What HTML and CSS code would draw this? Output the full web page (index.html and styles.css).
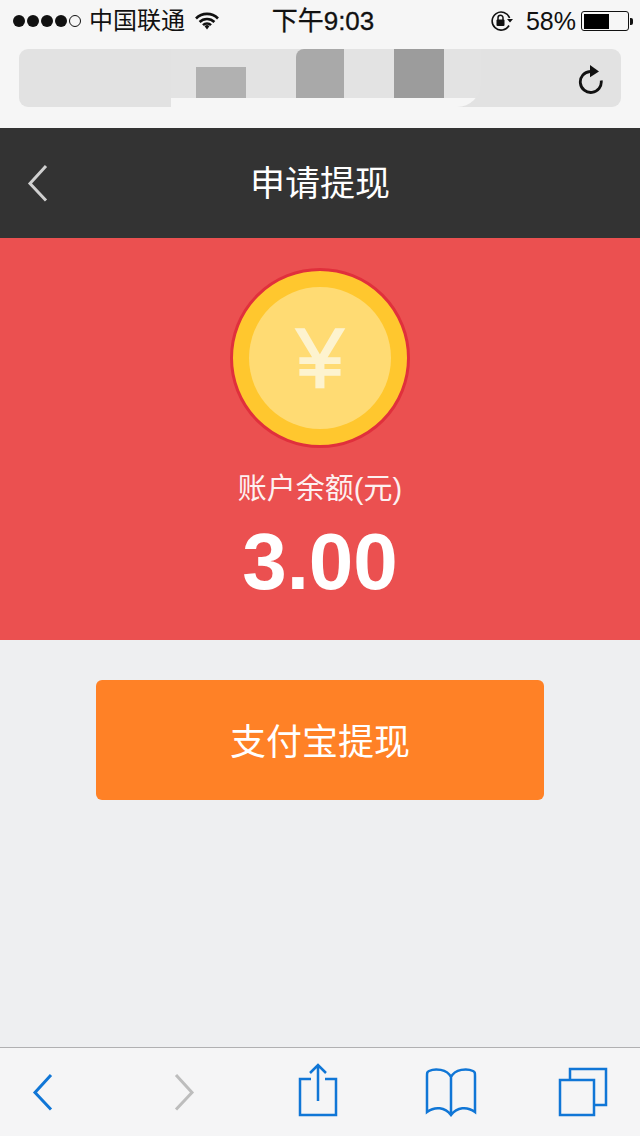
FILE: index.html
```html
<!DOCTYPE html>
<html lang="zh">
<head>
<meta charset="utf-8">
<title>申请提现</title>
<link rel="stylesheet" href="styles.css">
</head>
<body>
<div class="phone">
  <div class="chrome">
    <div class="status">
      <div class="status-left">
        <span class="signal"><i class="dot"></i><i class="dot"></i><i class="dot"></i><i class="dot"></i><i class="dot empty"></i></span>
        <span class="carrier">中国联通</span>
        <svg class="wifi" width="26" height="20" viewBox="0 0 26 20"><path d="M2 7.500a15.500 15.500 0 0 1 22 0M5.600 11a10.500 10.500 0 0 1 14.800 0M9 14.200a5.600 5.600 0 0 1 8 0" fill="none" stroke="#111" stroke-width="2.600"/><path d="M10.600 15.200a3.400 3.400 0 0 1 4.800 0L13 18.600z" fill="#111"/></svg>
      </div>
      <div class="clock">下午9:03</div>
      <div class="status-right">
        <svg class="lock" width="24" height="22" viewBox="0 0 24 22"><path d="M19 15.500A9 9 0 1 1 19.600 8" fill="none" stroke="#111" stroke-width="1.600"/><path d="M17 9h6l-3 3.600z" fill="#111"/><rect x="6.500" y="9.500" width="8" height="6.500" rx="1" fill="#111"/><path d="M8 10V7.800a2.500 2.500 0 0 1 5 0V10" fill="none" stroke="#111" stroke-width="1.500"/></svg>
        <span class="pct">58%</span>
        <span class="battery"><span class="battery-fill"></span></span>
        <span class="battery-tip"></span>
      </div>
    </div>
    <div class="url-bar">
      <span class="mask"></span>
      <span class="blur b1"></span>
      <span class="blur b2"></span>
      <span class="blur b3"></span>
      <svg class="reload" width="30" height="32" viewBox="0 0 30 32"><path d="M14 9.500a10.500 10.500 0 1 0 11.200 9" fill="none" stroke="#111" stroke-width="2.800"/><path d="M14 3l9 6.600-9 5.600z" fill="#111"/></svg>
    </div>
  </div>
  <header class="title-bar">
    <svg class="back" width="24" height="40" viewBox="0 0 24 40"><path d="M20 3L4 20.500l16 17" fill="none" stroke="#d0d0d0" stroke-width="3"/></svg>
    <h1 class="title">申请提现</h1>
  </header>
  <section class="balance">
    <div class="coin"><div class="coin-inner">¥</div></div>
    <div class="balance-label">账户余额(元)</div>
    <div class="balance-value">3.00</div>
  </section>
  <main class="content">
    <button class="withdraw">支付宝提现</button>
  </main>
  <footer class="toolbar">
    <svg class="tool-back" width="24" height="40" viewBox="0 0 24 40"><path d="M19 3L3 20.500l16 17" fill="none" stroke="#1076d6" stroke-width="3"/></svg>
    <svg class="tool-forward" width="24" height="40" viewBox="0 0 24 40"><path d="M5 3l16 17.500-16 17" fill="none" stroke="#bdbdbd" stroke-width="3"/></svg>
    <svg class="tool-share" width="40" height="54" viewBox="0 0 40 54"><path d="M13 16H2v36h36V16H27" fill="none" stroke="#1076d6" stroke-width="2.500"/><path d="M20 38V2M12 10l8-8 8 8" fill="none" stroke="#1076d6" stroke-width="2.500"/></svg>
    <svg class="tool-book" width="52" height="50" viewBox="0 0 52 50"><path d="M26 10C22 2 10 1 4 4 2 5 2 6 2 9v36c8-6 18-5 24 3 6-8 16-9 24-3V9c0-3 0-4-2-5-6-3-18-2-22 6v38" fill="none" stroke="#1076d6" stroke-width="2.500"/></svg>
    <svg class="tool-tabs" width="50" height="50" viewBox="0 0 50 50"><rect x="2" y="13" width="34" height="35" fill="none" stroke="#1076d6" stroke-width="2.500"/><path d="M12 12V2h36v36h-11" fill="none" stroke="#1076d6" stroke-width="2.500"/></svg>
  </footer>
</div>
</body>
</html>
```
FILE: styles.css
```css
* { box-sizing: border-box; }
html, body { margin: 0; padding: 0; }
body { font-family: "Liberation Sans", "Noto Sans CJK SC", sans-serif; }
.phone { width: 640px; height: 1136px; display: flex; flex-direction: column; background: #eeeff1; overflow: hidden; }

.chrome { height: 128px; background: #f6f6f6; padding: 0 19px; }
.status { height: 49px; margin: 0 -19px; padding: 0 7px 7px 13px; display: grid; grid-template-columns: 1fr auto 1fr; align-items: center; color: #111; }
.status-left { display: flex; align-items: center; }
.signal { display: flex; gap: 2px; margin-right: 8px; }
.dot { width: 12px; height: 12px; border-radius: 50%; background: #111; }
.dot.empty { background: transparent; border: 1px solid #111; }
.carrier { font-size: 24px; line-height: 28px; }
.wifi { margin-left: 9px; }
.clock { font-size: 26px; line-height: 28px; -webkit-text-stroke: 0.3px #111; }
.status-right { display: flex; align-items: center; justify-content: flex-end; }
.lock { margin-right: 12px; }
.pct { font-size: 25px; line-height: 28px; margin-right: 5px; }
.battery { width: 48px; height: 20px; border: 1.500px solid #111; border-radius: 3px; padding: 1.500px; display: block; }
.battery-fill { display: block; width: 25px; height: 100%; background: #000; }
.battery-tip { width: 3px; height: 7px; background: #111; border-radius: 0 2px 2px 0; margin-left: 1px; }

.url-bar { position: relative; height: 58px; background: #e2e2e2; border-radius: 9px; display: flex; align-items: center; justify-content: flex-end; padding-right: 15px; overflow: hidden; }
.reload { display: block; }
.mask { position: absolute; left: 152px; top: 0; width: 310px; height: 58px; background: #e3e3e3; border-radius: 0 0 24px 0; overflow: hidden; }
.mask::after { content: ""; position: absolute; left: 0; right: 0; bottom: 0; height: 9px; background: #f6f6f6; border-radius: 0 0 24px 0; }
.blur { position: absolute; bottom: 9px; }
.b1 { left: 177px; width: 50px; height: 31px; background: #b1b1b1; }
.b2 { left: 277px; width: 48px; height: 49px; background: #a9a9a9; border-radius: 8px 0 0 0; }
.b3 { left: 375px; width: 50px; height: 49px; background: #9c9c9c; }

.title-bar { height: 110px; background: #333; display: flex; align-items: center; justify-content: center; position: relative; }
.back { position: absolute; left: 26px; top: 35px; }
.title { margin: 0; font-size: 35px; font-weight: 400; color: #fff; line-height: 40px; position: relative; top: 1px; }

.balance { height: 402px; background: #eb5050; display: flex; flex-direction: column; align-items: center; padding-top: 30px; }
.coin { width: 180px; height: 180px; border-radius: 50%; background: #ffc72e; border: 3px solid #e0303c; display: flex; align-items: center; justify-content: center; }
.coin-inner { width: 142px; height: 142px; border-radius: 50%; background: #ffdb73; color: #fdf3cf; font-size: 86px; line-height: 142px; text-align: center; -webkit-text-stroke: 1.500px #fdf3cf; }
.balance-label { margin-top: 21px; font-size: 29px; line-height: 40px; color: #fff; opacity: 0.92; }
.balance-value { margin-top: 8px; font-size: 80px; line-height: 90px; font-weight: 700; color: #fff; }

.content { flex: 1; padding-top: 40px; display: flex; flex-direction: column; align-items: center; }
.withdraw { width: 448px; height: 120px; border: 0; border-radius: 6px; background: #ff8126; color: #fff; font: inherit; font-size: 36px; padding-bottom: 3px; }

.toolbar { height: 89px; background: #f5f5f6; border-top: 1px solid #b0b0b2; display: flex; align-items: center; padding: 0 32px; }
.tool-forward { margin-left: 114.500px; }
.tool-share { margin-left: 103.500px; margin-top: -4px; }
.tool-book { margin-left: 86.500px; }
.tool-tabs { margin-left: 81.500px; }
```
